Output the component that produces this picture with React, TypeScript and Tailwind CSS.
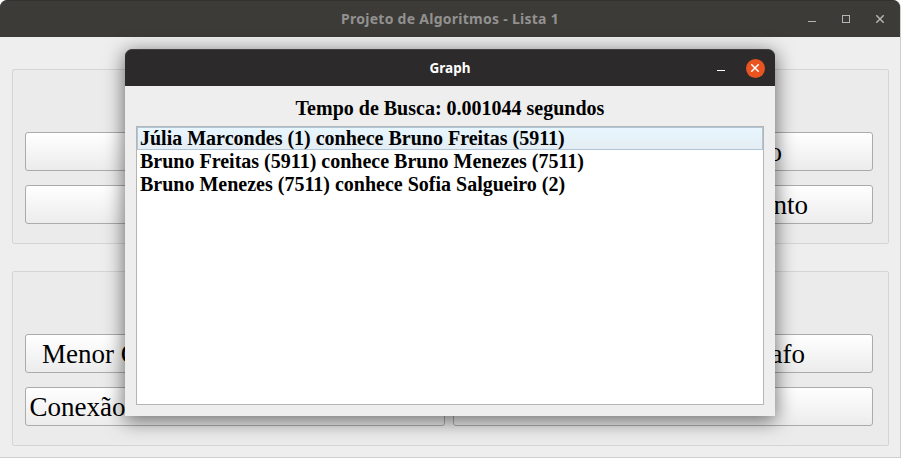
type ButtonProps = { label?: string; className?: string };

function PushButton({ label = "", className = "" }: ButtonProps) {
  return (
    <button
      className={`flex h-[39px] w-[420px] items-center overflow-hidden whitespace-nowrap rounded-[3px] border border-[#ababab] bg-linear-to-b from-white to-[#ececec] font-['Liberation_Serif',serif] text-[27px] leading-[30px] text-black ${className}`}
    >
      {label}
    </button>
  );
}

function Group({ rows }: { rows: ButtonProps[][] }) {
  return (
    <section className="flex h-[175px] w-[877px] flex-col gap-[14px] rounded-[2px] border border-[#d5d5d5] bg-[#ebebeb] px-3 pt-[62px]">
      {rows.map((row, i) => (
        <div key={i} className="flex gap-2">
          {row.map((b, j) => (
            <PushButton key={j} {...b} />
          ))}
        </div>
      ))}
    </section>
  );
}

function Minimize() {
  return (
    <svg width="8" height="10" viewBox="0 0 8 10" shapeRendering="crispEdges">
      <path d="M0 7.5H8" stroke="currentColor" />
    </svg>
  );
}

function Cross() {
  return (
    <svg width="8" height="8" viewBox="0 0 8 8">
      <path d="M0.2 0.2L7.8 7.8M7.8 0.2L0.2 7.8" stroke="currentColor" strokeWidth="1.5" />
    </svg>
  );
}

const results = [
  "Júlia Marcondes (1) conhece Bruno Freitas (5911)",
  "Bruno Freitas (5911) conhece Bruno Menezes (7511)",
  "Bruno Menezes (7511) conhece Sofia Salgueiro (2)",
];

function GraphDialog() {
  return (
    <div className="absolute left-[125px] top-[49px] flex h-[367px] w-[650px] flex-col rounded-t-[7px] bg-[#eeeeee] shadow-[0_4px_19px_1px_rgba(0,0,0,0.55)]">
      <header className="relative flex h-[37px] shrink-0 items-center justify-center rounded-t-[7px] border-t border-[#403e3e] bg-[#2c2a2b] text-white">
        <h2 className="font-['Noto_Sans',sans-serif] text-[13.5px] font-bold leading-5">Graph</h2>
        <div className="absolute right-[10.5px] top-[8.5px] flex items-center gap-[20.5px]">
          <Minimize />
          <span className="flex size-[19px] items-center justify-center rounded-full bg-[#e95420]">
            <Cross />
          </span>
        </div>
      </header>
      <main className="flex grow flex-col px-[11px] pb-[11px] pt-[11px] font-['Liberation_Serif',serif] text-[20px] font-bold text-black">
        <p className="h-[29px] text-center leading-[23px]">Tempo de Busca: 0.001044 segundos</p>
        <ul className="grow border border-[#b5b5b5] bg-white leading-[23px]">
          {results.map((r, i) => (
            <li
              key={r}
              className={
                i === 0
                  ? "h-[23px] border border-[#b1c5d6] bg-linear-to-b from-[#e8f6ff] to-[#e4edf3] pl-[2px] leading-[21px]"
                  : "h-[23px] pl-[3px]"
              }
            >
              {r}
            </li>
          ))}
        </ul>
      </main>
    </div>
  );
}

export default function App() {
  return (
    <div className="relative h-[458px] w-[901px] overflow-hidden bg-white">
      <div className="flex h-[458px] w-[901px] flex-col rounded-t-[8px] border-b border-r border-[#cecece] bg-[#eeeeee]">
        <header className="relative flex h-[37px] shrink-0 items-center justify-center rounded-t-[7px] border-t border-[#32312e] bg-[#3c3b37] text-[#929190]">
          <h1 className="font-['Noto_Sans',sans-serif] text-[14px] font-bold leading-5 tracking-[0.27px]">
            Projeto de Algoritmos - Lista 1
          </h1>
          <div className="absolute right-[16px] top-[13px] flex items-center gap-[26px] text-[#b5b4b2]">
            <Minimize />
            <span className="size-2 border border-current" />
            <Cross />
          </div>
        </header>
        <main className="flex flex-col gap-[27px] pl-3 pt-8">
          <Group
            rows={[
              [{}, { label: "o", className: "justify-end pr-[90px]" }],
              [{}, { label: "nto", className: "justify-end pr-[64px]" }],
            ]}
          />
          <Group
            rows={[
              [
                { label: "Menor C", className: "justify-start pl-4" },
                { label: "afo", className: "justify-end pr-[67px]" },
              ],
              [{ label: "Conexão", className: "justify-start pl-[3.5px]" }, {}],
            ]}
          />
        </main>
      </div>
      <GraphDialog />
    </div>
  );
}
